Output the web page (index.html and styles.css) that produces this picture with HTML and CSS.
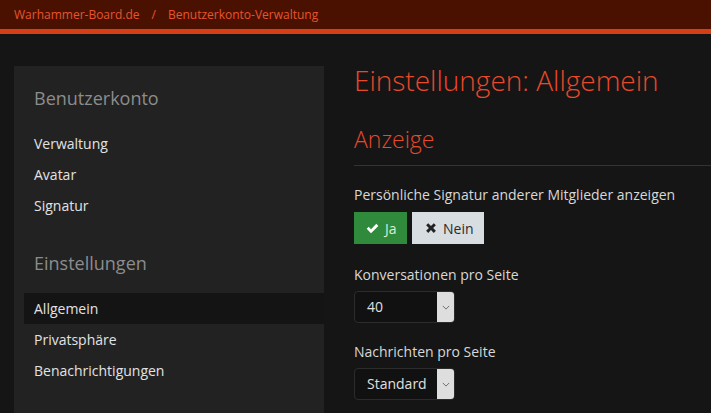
FILE: index.html
```html
<!DOCTYPE html>
<html lang="de">
<head>
<meta charset="utf-8">
<title>Einstellungen: Allgemein</title>
<link rel="stylesheet" href="styles.css">
</head>
<body>
<header class="topbar">
  <nav class="crumbs">
    <a class="crumb" href="#">Warhammer-Board.de</a>
    <span class="sep">/</span>
    <a class="crumb" href="#">Benutzerkonto-Verwaltung</a>
  </nav>
</header>
<div class="layout">
  <aside class="sidebar">
    <h3 class="side-head">Benutzerkonto</h3>
    <ul class="side-list">
      <li class="side-item">Verwaltung</li>
      <li class="side-item">Avatar</li>
      <li class="side-item">Signatur</li>
    </ul>
    <h3 class="side-head side-head-2">Einstellungen</h3>
    <ul class="side-list">
      <li class="side-item active">Allgemein</li>
      <li class="side-item">Privatsphäre</li>
      <li class="side-item">Benachrichtigungen</li>
    </ul>
  </aside>
  <main class="content">
    <h1 class="title">Einstellungen: Allgemein</h1>
    <h2 class="section">Anzeige</h2>
    <div class="field field-first">
      <div class="label">Persönliche Signatur anderer Mitglieder anzeigen</div>
      <div class="btn-group">
        <span class="btn btn-yes">
          <svg class="ico" viewBox="0 0 16 16" width="13" height="13"><path d="M0.8 8.4 L3.3 5.9 L6.2 8.8 L12.7 2.3 L15.2 4.8 L6.2 13.8 Z" fill="#fff"/></svg>
          <span>Ja</span>
        </span>
        <span class="btn btn-no">
          <svg class="ico" viewBox="0 0 16 16" width="12" height="12"><path d="M1.5 4.3 L4.3 1.5 L8 5.2 L11.7 1.5 L14.5 4.3 L10.8 8 L14.5 11.7 L11.7 14.5 L8 10.8 L4.3 14.5 L1.5 11.7 L5.2 8 Z" fill="#222"/></svg>
          <span>Nein</span>
        </span>
      </div>
    </div>
    <div class="field field-second">
      <div class="label">Konversationen pro Seite</div>
      <div class="select">
        <span class="select-val">40</span>
        <span class="select-btn"><svg viewBox="0 0 10 6" width="8" height="5"><path d="M1 1 L5 5 L9 1" fill="none" stroke="#555" stroke-width="1"/></svg></span>
      </div>
    </div>
    <div class="field field-third">
      <div class="label">Nachrichten pro Seite</div>
      <div class="select">
        <span class="select-val">Standard</span>
        <span class="select-btn"><svg viewBox="0 0 10 6" width="8" height="5"><path d="M1 1 L5 5 L9 1" fill="none" stroke="#555" stroke-width="1"/></svg></span>
      </div>
    </div>
  </main>
</div>
</body>
</html>
```
FILE: styles.css
```css
* { box-sizing: border-box; }
html, body { margin: 0; padding: 0; }
body {
  background: #151515;
  font-family: "Open Sans", "Noto Sans", sans-serif;
  color: #dcdcdc;
  height: 413px;
  overflow: hidden;
}
.topbar {
  height: 34px;
  background: #4b1100;
  border-bottom: 5px solid #d63f16;
}
.crumbs {
  padding-left: 14px;
  height: 29px;
  display: flex;
  align-items: center;
  font-size: 12px;
}
.crumb { color: #e5552f; text-decoration: none; }
.sep { color: #e5552f; margin: 0 12px; }
.layout {
  display: flex;
  padding: 32px 0 0 14px;
  gap: 30px;
  height: 379px;
}
.sidebar {
  width: 310px;
  flex: none;
  background: #222222;
  padding: 20px 0 0 0;
}
.side-head {
  margin: 0;
  padding-left: 20px;
  font-size: 18px;
  line-height: 24px;
  font-weight: 400;
  color: #8c8c8c;
}
.side-head-2 { margin-top: 30px; }
.side-list {
  list-style: none;
  margin: 18px 0 0 10px;
  padding: 0;
}
.side-item {
  font-size: 14px;
  line-height: 31px;
  height: 31px;
  padding-left: 10px;
  color: #e2e2e2;
}
.side-item.active { background: #141414; line-height: 32px; }
.content { flex: 1; min-width: 0; }
.title {
  margin: 0;
  font-size: 28px;
  line-height: 28px;
  font-weight: 300;
  color: #e8492b;
}
.section {
  margin: 30px 0 0 0;
  font-size: 23px;
  line-height: 30px;
  font-weight: 300;
  color: #e8492b;
  padding-bottom: 11px;
  border-bottom: 1px solid #333333;
}
.field-first { margin-top: 19px; }
.field-second { margin-top: 21px; }
.field-third { margin-top: 19px; }
.label {
  font-size: 14px;
  line-height: 20px;
  color: #d8d8d8;
}
.btn-group { display: flex; gap: 5px; margin-top: 7px; }
.btn {
  height: 32px;
  display: inline-flex;
  align-items: center;
  gap: 6px;
  font-size: 14px;
}
.btn-yes { background: #2f8a3c; color: #d9f0d9; width: 53px; padding-left: 12px; }
.btn-no { background: #d8dde1; color: #2b2b2b; width: 72px; padding-left: 13px; }
.ico { flex: none; }
.select {
  margin-top: 6px;
  width: 101px;
  height: 32px;
  display: flex;
  background: #111111;
  border: 1px solid #2c2c2c;
  border-radius: 4px;
  overflow: hidden;
}
.select-val {
  flex: 1;
  padding-left: 12px;
  font-size: 14px;
  line-height: 30px;
  color: #e0e0e0;
}
.select-btn {
  width: 17px;
  background: #dedede;
  display: flex;
  align-items: center;
  justify-content: center;
}
```
